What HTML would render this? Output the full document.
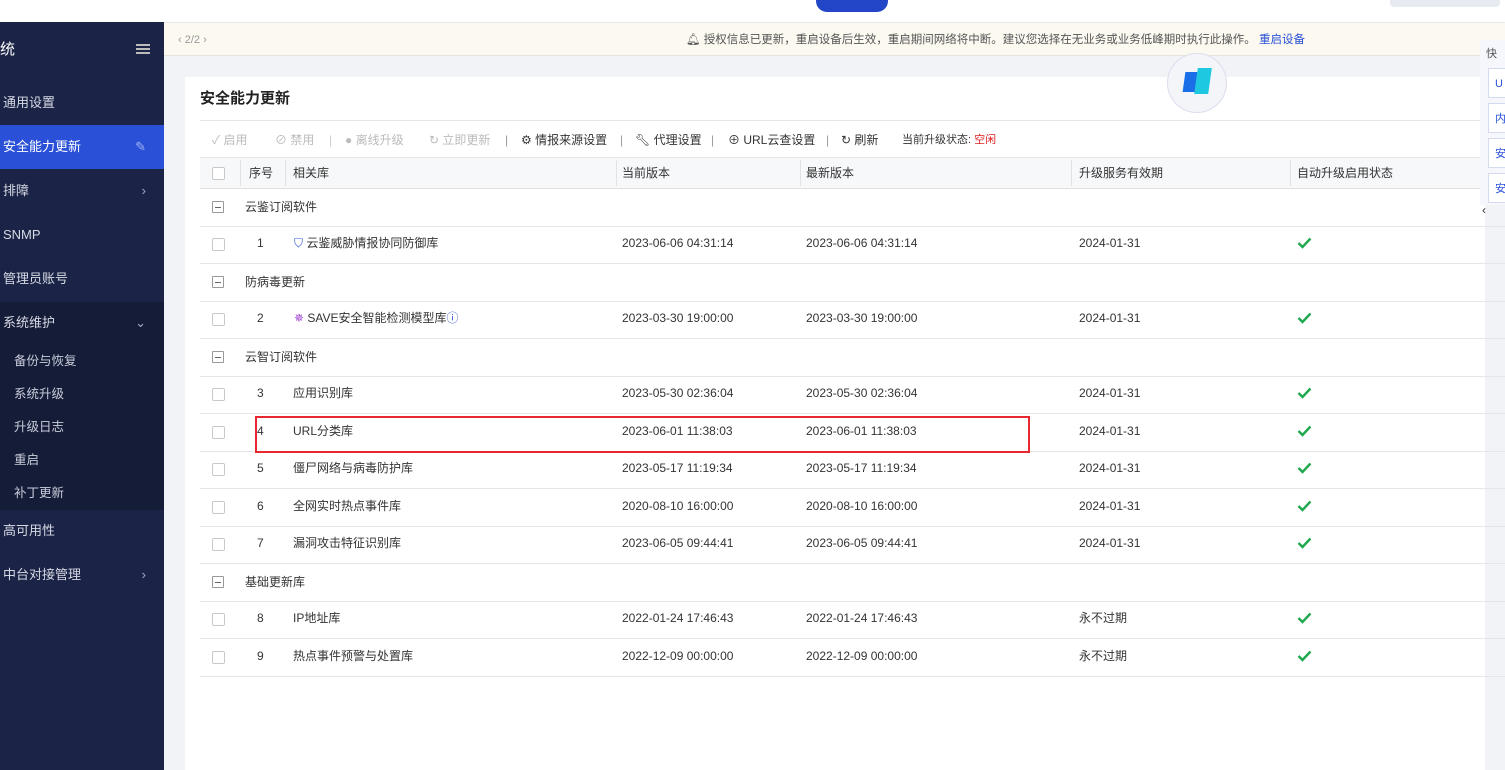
<!DOCTYPE html>
<html><head><meta charset="utf-8"><style>
*{margin:0;padding:0;box-sizing:border-box}
body{width:1505px;height:770px;overflow:hidden;position:relative;background:#f2f3f6;font-family:"Liberation Sans","Noto Sans CJK SC",sans-serif;font-size:12px;color:#333;line-height:16px}
.abs{position:absolute}
#top{left:0;top:0;width:1505px;height:22px;background:#fff;box-shadow:0 1px 3px rgba(0,0,0,.08)}
#side{left:0;top:22px;width:164px;height:748px;background:#1b2446;color:#d6d9e4;font-size:13px}
.mi{position:absolute;left:0;width:164px;height:44px;line-height:44px;padding-left:3px}
.sub{position:absolute;left:14px;font-size:12.5px;color:#c9cddb}
.arr{position:absolute;right:18px;top:0;color:#aab}
#notice{left:164px;top:23px;width:1341px;height:33px;background:#fcf9f1;border-bottom:1px solid #e6e3dc}
#card{left:185px;top:77px;width:1300px;height:693px;background:#fff}
.row{position:absolute;left:200px;width:1305px;border-bottom:1px solid #e6e6e6;height:38px}
.cb{position:absolute;left:212px;width:13px;height:13px;border:1px solid #c8c8c8;border-radius:2px;background:#fff}
.gb{position:absolute;left:212px;width:12px;height:12px;border:1px solid #999;border-radius:1px}
.gb:after{content:"";position:absolute;left:2px;top:5px;width:6px;height:1px;background:#666}
.t{position:absolute;font-size:12px;color:#333;white-space:nowrap;line-height:16px;height:16px}
.ck{position:absolute;left:1297px;width:15px;height:12px}
.tb{position:absolute;top:132px;font-size:12px;white-space:nowrap;line-height:16px}
</style></head><body>
<svg width="0" height="0" style="position:absolute"><defs><symbol id="ck" viewBox="0 0 15 12"><polyline points="1.5,6 5.5,10 13.5,1.5" fill="none" stroke="#1fa84e" stroke-width="2.4"/></symbol></defs></svg>
<div id="top" class="abs">
  <div class="abs" style="left:816px;top:-10px;width:72px;height:22px;background:#2346c8;border-radius:11px"></div>
  <div class="abs" style="left:1390px;top:0;width:110px;height:7px;background:#e8eaf2;border-radius:0 0 4px 4px"></div>
</div>
<div id="side" class="abs">
  <div class="abs" style="left:0;top:20px;font-size:15px;color:#fff">统</div>
  <div class="abs" style="left:136px;top:22px;width:14px;height:2px;background:#bbb;box-shadow:0 4px 0 #bbb,0 8px 0 #bbb"></div>
  <div class="mi" style="top:59px">通用设置</div>
  <div class="mi" style="top:103px;background:#2a50d8;color:#fff">安全能力更新<span class="arr" style="color:#9fb3f0">✎</span></div>
  <div class="mi" style="top:147px">排障<span class="arr">›</span></div>
  <div class="mi" style="top:191px">SNMP</div>
  <div class="mi" style="top:235px">管理员账号</div>
  <div class="abs" style="left:0;top:280px;width:164px;height:208px;background:#151c38"></div>
  <div class="mi" style="top:279px">系统维护<span class="arr">⌄</span></div>
  <div class="sub" style="top:331px">备份与恢复</div>
  <div class="sub" style="top:364px">系统升级</div>
  <div class="sub" style="top:397px">升级日志</div>
  <div class="sub" style="top:430px">重启</div>
  <div class="sub" style="top:463px">补丁更新</div>
  <div class="mi" style="top:487px">高可用性</div>
  <div class="mi" style="top:531px">中台对接管理<span class="arr">›</span></div>
</div>
<div id="notice" class="abs">
  <div class="abs" style="left:14px;top:9px;color:#999;font-size:11px">‹ 2/2 ›</div>
  <div class="abs" style="left:522px;top:9px;font-size:11.5px;color:#555">🔔︎ 授权信息已更新，重启设备后生效，重启期间网络将中断。建议您选择在无业务或业务低峰期时执行此操作。 <span style="color:#2a50d8">重启设备</span></div>
</div>
<div id="card" class="abs"></div>
<div class="abs" style="left:1167px;top:53px;width:60px;height:60px;border-radius:50%;background:#f3f5f9;border:1px solid #dde">
  <div class="abs" style="left:16px;top:18px;width:14px;height:20px;background:#1a6fe8;transform:skewX(-8deg)"></div>
  <div class="abs" style="left:28px;top:14px;width:14px;height:26px;background:#1ec8e0;transform:skewX(-8deg)"></div>
</div>
<div class="abs" style="left:200px;top:91px;font-size:15px;font-weight:bold;color:#222">安全能力更新</div>
<div class="abs" style="left:200px;top:120px;width:1290px;height:1px;background:#e6e6e6"></div>
<div class="tb" style="left:212px;color:#bbb">✓ 启用</div>
<div class="tb" style="left:275px;color:#bbb">⊘ 禁用</div>
<div class="tb" style="left:329px;color:#ccc">|</div>
<div class="tb" style="left:345px;color:#bbb">● 离线升级</div>
<div class="tb" style="left:429px;color:#bbb">↻ 立即更新</div>
<div class="tb" style="left:505px;color:#999">|</div>
<div class="tb" style="left:521px;color:#333">⚙ 情报来源设置</div>
<div class="tb" style="left:620px;color:#999">|</div>
<div class="tb" style="left:635px;color:#333">🔧︎ 代理设置</div>
<div class="tb" style="left:711px;color:#999">|</div>
<div class="tb" style="left:728px;color:#333">⊕ URL云查设置</div>
<div class="tb" style="left:826px;color:#999">|</div>
<div class="tb" style="left:841px;color:#333">↻ 刷新</div>
<div class="tb" style="left:902px;color:#333;font-size:11px">当前升级状态: <span style="color:#e02020">空闲</span></div>
<div class="abs" style="left:200px;top:157px;width:1305px;height:32px;background:#f7f8fa;border-top:1px solid #e6e6e6;border-bottom:1px solid #e0e0e0"></div>
<div class="cb" style="top:167px"></div>
<div class="t" style="left:249px;top:165px">序号</div>
<div class="t" style="left:293px;top:165px">相关库</div>
<div class="t" style="left:622px;top:165px">当前版本</div>
<div class="t" style="left:806px;top:165px">最新版本</div>
<div class="t" style="left:1079px;top:165px">升级服务有效期</div>
<div class="t" style="left:1297px;top:165px">自动升级启用状态</div>
<div class="abs" style="left:240px;top:160px;width:1px;height:26px;background:#e3e3e3;box-shadow:45px 0 0 #e3e3e3,376px 0 0 #e3e3e3,560px 0 0 #e3e3e3,831px 0 0 #e3e3e3,1050px 0 0 #e3e3e3"></div>

<div class="row" style="top:189px"></div><div class="gb" style="top:201px"></div><div class="t" style="left:245px;top:199px">云鉴订阅软件</div>
<div class="row" style="top:226px"></div><div class="cb" style="top:238px"></div><div class="t" style="left:257px;top:235px">1</div><div class="t" style="left:294px;top:235px"><span style="color:#2a50d8">⛉</span> 云鉴威胁情报协同防御库</div><div class="t" style="left:622px;top:235px">2023-06-06 04:31:14</div><div class="t" style="left:806px;top:235px">2023-06-06 04:31:14</div><div class="t" style="left:1079px;top:235px">2024-01-31</div><svg class="ck" style="top:237px"><use href="#ck"/></svg>
<div class="row" style="top:264px"></div><div class="gb" style="top:276px"></div><div class="t" style="left:245px;top:274px">防病毒更新</div>
<div class="row" style="top:301px"></div><div class="cb" style="top:313px"></div><div class="t" style="left:257px;top:310px">2</div><div class="t" style="left:294px;top:310px"><span style="color:#a040d0">✵</span> SAVE安全智能检测模型库<span style="color:#2a50d8">ⓘ</span></div><div class="t" style="left:622px;top:310px">2023-03-30 19:00:00</div><div class="t" style="left:806px;top:310px">2023-03-30 19:00:00</div><div class="t" style="left:1079px;top:310px">2024-01-31</div><svg class="ck" style="top:312px"><use href="#ck"/></svg>
<div class="row" style="top:339px"></div><div class="gb" style="top:351px"></div><div class="t" style="left:245px;top:349px">云智订阅软件</div>
<div class="row" style="top:376px"></div><div class="cb" style="top:388px"></div><div class="t" style="left:257px;top:385px">3</div><div class="t" style="left:293px;top:385px">应用识别库</div><div class="t" style="left:622px;top:385px">2023-05-30 02:36:04</div><div class="t" style="left:806px;top:385px">2023-05-30 02:36:04</div><div class="t" style="left:1079px;top:385px">2024-01-31</div><svg class="ck" style="top:387px"><use href="#ck"/></svg>
<div class="row" style="top:414px"></div><div class="cb" style="top:426px"></div><div class="t" style="left:257px;top:423px">4</div><div class="t" style="left:293px;top:423px">URL分类库</div><div class="t" style="left:622px;top:423px">2023-06-01 11:38:03</div><div class="t" style="left:806px;top:423px">2023-06-01 11:38:03</div><div class="t" style="left:1079px;top:423px">2024-01-31</div><svg class="ck" style="top:425px"><use href="#ck"/></svg>
<div class="row" style="top:451px"></div><div class="cb" style="top:463px"></div><div class="t" style="left:257px;top:460px">5</div><div class="t" style="left:293px;top:460px">僵尸网络与病毒防护库</div><div class="t" style="left:622px;top:460px">2023-05-17 11:19:34</div><div class="t" style="left:806px;top:460px">2023-05-17 11:19:34</div><div class="t" style="left:1079px;top:460px">2024-01-31</div><svg class="ck" style="top:462px"><use href="#ck"/></svg>
<div class="row" style="top:489px"></div><div class="cb" style="top:501px"></div><div class="t" style="left:257px;top:498px">6</div><div class="t" style="left:293px;top:498px">全网实时热点事件库</div><div class="t" style="left:622px;top:498px">2020-08-10 16:00:00</div><div class="t" style="left:806px;top:498px">2020-08-10 16:00:00</div><div class="t" style="left:1079px;top:498px">2024-01-31</div><svg class="ck" style="top:500px"><use href="#ck"/></svg>
<div class="row" style="top:526px"></div><div class="cb" style="top:538px"></div><div class="t" style="left:257px;top:535px">7</div><div class="t" style="left:293px;top:535px">漏洞攻击特征识别库</div><div class="t" style="left:622px;top:535px">2023-06-05 09:44:41</div><div class="t" style="left:806px;top:535px">2023-06-05 09:44:41</div><div class="t" style="left:1079px;top:535px">2024-01-31</div><svg class="ck" style="top:537px"><use href="#ck"/></svg>
<div class="row" style="top:564px"></div><div class="gb" style="top:576px"></div><div class="t" style="left:245px;top:574px">基础更新库</div>
<div class="row" style="top:601px"></div><div class="cb" style="top:613px"></div><div class="t" style="left:257px;top:610px">8</div><div class="t" style="left:293px;top:610px">IP地址库</div><div class="t" style="left:622px;top:610px">2022-01-24 17:46:43</div><div class="t" style="left:806px;top:610px">2022-01-24 17:46:43</div><div class="t" style="left:1079px;top:610px">永不过期</div><svg class="ck" style="top:612px"><use href="#ck"/></svg>
<div class="row" style="top:639px"></div><div class="cb" style="top:651px"></div><div class="t" style="left:257px;top:648px">9</div><div class="t" style="left:293px;top:648px">热点事件预警与处置库</div><div class="t" style="left:622px;top:648px">2022-12-09 00:00:00</div><div class="t" style="left:806px;top:648px">2022-12-09 00:00:00</div><div class="t" style="left:1079px;top:648px">永不过期</div><svg class="ck" style="top:650px"><use href="#ck"/></svg>

<div class="abs" style="left:255px;top:416px;width:775px;height:37px;border:2px solid #e8282e"></div>

<div class="abs" style="left:1480px;top:40px;width:25px;height:165px;background:#f5f7fc"></div>
<div class="abs" style="left:1486px;top:46px;font-size:11px;color:#555">快</div>
<div class="abs" style="left:1488px;top:68px;width:20px;height:30px;border:1px solid #d4dbef;background:#fff;color:#2a50d8;font-size:11px;padding:7px 0 0 6px">U</div>
<div class="abs" style="left:1488px;top:103px;width:20px;height:30px;border:1px solid #d4dbef;background:#fff;color:#2a50d8;font-size:11px;padding:7px 0 0 6px">内</div>
<div class="abs" style="left:1488px;top:138px;width:20px;height:30px;border:1px solid #d4dbef;background:#fff;color:#2a50d8;font-size:11px;padding:7px 0 0 6px">安</div>
<div class="abs" style="left:1488px;top:173px;width:20px;height:30px;border:1px solid #d4dbef;background:#fff;color:#2a50d8;font-size:11px;padding:7px 0 0 6px">安</div>
<div class="abs" style="left:1482px;top:202px;font-size:12px;color:#333">‹</div>
</body></html>
